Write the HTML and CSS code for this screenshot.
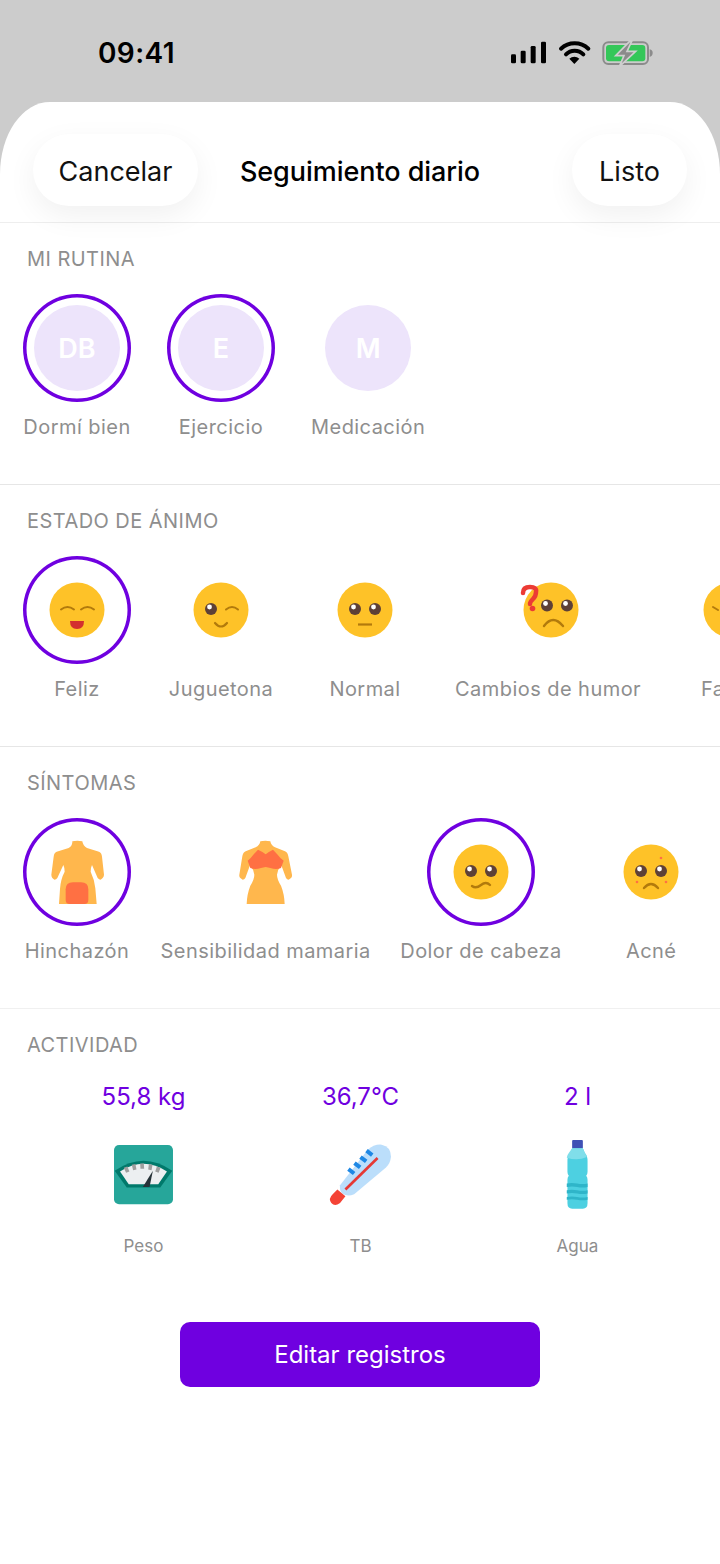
FILE: index.html
```html
<!DOCTYPE html>
<html lang="es">
<head>
<meta charset="utf-8">
<title>Seguimiento diario</title>
<link rel="stylesheet" href="styles.css">
</head>
<body>
<div class="screen">
  <div class="status">
    <span class="time">09:41</span>
    <svg class="status-icons" width="146" height="30" viewBox="90 60 438 90">
      <rect x="93" y="103" width="15" height="27" rx="4" fill="#000"/>
      <rect x="122" y="92" width="15" height="38" rx="4" fill="#000"/>
      <rect x="152" y="78" width="15" height="52" rx="4" fill="#000"/>
      <rect x="183" y="65" width="15" height="65" rx="4" fill="#000"/>
      <path d="M243 86a60 60 0 0 1 82 0" fill="none" stroke="#000" stroke-width="12" stroke-linecap="round"/>
      <path d="M258 103a36 36 0 0 1 52 0" fill="none" stroke="#000" stroke-width="12" stroke-linecap="round"/>
      <path d="M268 116a22 22 0 0 1 30 0l-15 16z" fill="#000"/>
      <rect x="370" y="67" width="134" height="65" rx="15" fill="none" stroke="#8b8b8b" stroke-width="6"/>
      <rect x="378" y="75" width="118" height="49" rx="9" fill="#34c759"/>
      <path d="M509 88c6 2 9 5 9 11s-3 10-9 12z" fill="#8b8b8b"/>
      <path d="M449 64l-42 43h25l-14 33 49-46h-26l14-30z" fill="#8b8b8b" stroke="#cfcfcf" stroke-width="5"/>
    </svg>
  </div>

  <main class="sheet">
    <header class="top">
      <button class="pill pill-left">Cancelar</button>
      <h1 class="title">Seguimiento diario</h1>
      <button class="pill pill-right">Listo</button>
    </header>

    <section class="block">
      <h2 class="heading">MI RUTINA</h2>
      <div class="row">
        <div class="item">
          <div class="circle on"><span class="initials">DB</span></div>
          <span class="label">Dormí bien</span>
        </div>
        <div class="item">
          <div class="circle on"><span class="initials">E</span></div>
          <span class="label">Ejercicio</span>
        </div>
        <div class="item">
          <div class="circle"><span class="initials">M</span></div>
          <span class="label">Medicación</span>
        </div>
      </div>
    </section>

    <section class="block">
      <h2 class="heading">ESTADO DE ÁNIMO</h2>
      <div class="row">
        <div class="item">
          <div class="circle on">
            <svg class="emoji" viewBox="-28 -28 56 56">
              <circle r="27.5" fill="#fec228"/>
              <path d="M-16-.5q6.500-5 13 0M4-.5q6.500-5 13 0" fill="none" stroke="#b27a0c" stroke-width="2" stroke-linecap="round"/>
              <path d="M-7 11h14q0 8-7 8t-7-8z" fill="#d32f2f"/>
            </svg>
          </div>
          <span class="label">Feliz</span>
        </div>
        <div class="item">
          <div class="circle">
            <svg class="emoji" viewBox="-28 -28 56 56">
              <circle r="27.5" fill="#fec228"/>
              <circle cx="-10" cy="-1" r="6" fill="#5d4037"/>
              <circle cx="-11.500" cy="-3" r="2.400" fill="#fff"/>
              <path d="M5-.5q6-5 12 0" fill="none" stroke="#b27a0c" stroke-width="2" stroke-linecap="round"/>
              <path d="M-6 13q6 7 12 0" fill="none" stroke="#b27a0c" stroke-width="2.200" stroke-linecap="round"/>
            </svg>
          </div>
          <span class="label">Juguetona</span>
        </div>
        <div class="item">
          <div class="circle">
            <svg class="emoji" viewBox="-28 -28 56 56">
              <circle r="27.5" fill="#fec228"/>
              <circle cx="-10" cy="-1" r="6" fill="#5d4037"/>
              <circle cx="-11.500" cy="-3" r="2.400" fill="#fff"/>
              <circle cx="10" cy="-1" r="6" fill="#5d4037"/>
              <circle cx="8.500" cy="-3" r="2.400" fill="#fff"/>
              <path d="M-7 14.500h14" stroke="#b27a0c" stroke-width="2.200"/>
            </svg>
          </div>
          <span class="label">Normal</span>
        </div>
        <div class="item">
          <div class="circle">
            <svg class="emoji emoji-wide" viewBox="-34 -28 62 56">
              <circle r="27.500" fill="#fec228"/>
              <circle cx="-4" cy="-4.500" r="6" fill="#5d4037"/>
              <circle cx="-5.500" cy="-6.500" r="2.400" fill="#fff"/>
              <circle cx="16" cy="-4.500" r="6" fill="#5d4037"/>
              <circle cx="14.500" cy="-6.500" r="2.400" fill="#fff"/>
              <path d="M-7 16q9-12 19 0" fill="none" stroke="#b27a0c" stroke-width="2.400" stroke-linecap="round"/>
              <path d="M-28-17q0-6 7-6t6 5q0 4-3 7t-3 5" fill="none" stroke="#ec3b35" stroke-width="4.500" stroke-linecap="round"/>
              <circle cx="-18.500" cy="-1.500" r="2.800" fill="#ec3b35"/>
            </svg>
          </div>
          <span class="label">Cambios de humor</span>
        </div>
        <div class="item">
          <div class="circle">
            <svg class="emoji" viewBox="-28 -28 56 56">
              <circle r="27.5" fill="#fec228"/>
              <path d="M-18-3l5 3" stroke="#b27a0c" stroke-width="2" stroke-linecap="round"/>
            </svg>
          </div>
          <span class="label">Fatiga</span>
        </div>
      </div>
    </section>

    <section class="block block-soft">
      <h2 class="heading">SÍNTOMAS</h2>
      <div class="row row-tight">
        <div class="item">
          <div class="circle on">
            <svg class="figure" viewBox="120 88 165 195">
              <path d="M187 92q15-4 30 0q2 14 14 20l36 11q8 3 9 15l6 54q0 6-4 10l-6 5q-5 0-9-5l-17-39q-4 8-4 20 12 25 14 50l4 47H147l3-45q2-30 14-52 0-12-4-20l-18 39q-3 5-9 5l-6-5q-3-4-3-10l7-54q1-12 9-15l36-11q12-6 11-20z" fill="#ffb74d"/>
              <path d="M167 236q0-21 22-21h24q22 0 22 21v32q0 12-12 12h-44q-12 0-12-12z" fill="#ff7043"/>
            </svg>
          </div>
          <span class="label">Hinchazón</span>
        </div>
        <div class="item">
          <div class="circle">
            <svg class="figure" viewBox="685 88 165 195">
              <path d="M752 92q15-4 30 0q2 12 14 18l30 12q8 3 10 15l11 55q1 6-3 10l-7 5q-5 0-8-5l-14-38q-12 14-13 28 0 14 12 33 10 25 11 55H711q1-30 11-55 12-19 12-33-1-14-13-28l-14 38q-3 5-8 5l-7-5q-4-4-3-10l9-55q2-12 10-15l30-12q12-6 14-18z" fill="#ffb74d"/>
              <path d="M714 150q10-8 17-18l14-15q12 5 23 14 11-9 22-14l14 15q7 10 18 18l-8 22q-14 6-32 0l-14-3-14 3q-18 6-32 0z" fill="#ff7043"/>
            </svg>
          </div>
          <span class="label">Sensibilidad mamaria</span>
        </div>
        <div class="item">
          <div class="circle on">
            <svg class="emoji" viewBox="-28 -28 56 56">
              <circle r="27.5" fill="#fec228"/>
              <circle cx="-10" cy="-1" r="6" fill="#5d4037"/>
              <circle cx="-11.500" cy="-3" r="2.400" fill="#fff"/>
              <circle cx="10" cy="-1" r="6" fill="#5d4037"/>
              <circle cx="8.500" cy="-3" r="2.400" fill="#fff"/>
              <path d="M-9 14q4 3 9-1t9 0" fill="none" stroke="#b27a0c" stroke-width="2.400" stroke-linecap="round"/>
            </svg>
          </div>
          <span class="label">Dolor de cabeza</span>
        </div>
        <div class="item item-last">
          <div class="circle">
            <svg class="emoji" viewBox="-28 -28 56 56">
              <circle r="27.5" fill="#fec228"/>
              <circle cx="-10" cy="-1" r="6" fill="#5d4037"/>
              <circle cx="-11.500" cy="-3" r="2.400" fill="#fff"/>
              <circle cx="10" cy="-1" r="6" fill="#5d4037"/>
              <circle cx="8.500" cy="-3" r="2.400" fill="#fff"/>
              <path d="M-7 16q7-8 14 0" fill="none" stroke="#b27a0c" stroke-width="2.400" stroke-linecap="round"/>
              <circle cx="10" cy="-14" r="1.300" fill="#ff7043"/>
              <circle cx="15" cy="10" r="1.300" fill="#ff7043"/>
              <circle cx="-14" cy="10" r="1.300" fill="#ff7043"/>
            </svg>
          </div>
          <span class="label">Acné</span>
        </div>
      </div>
    </section>

    <section class="block block-last">
      <h2 class="heading">ACTIVIDAD</h2>
      <div class="stats">
        <div class="stat">
          <span class="value">55,8 kg</span>
          <svg class="stat-icon" viewBox="66 39 188 188">
            <rect x="72" y="45" width="176" height="177" rx="15" fill="#26a69a"/>
            <path d="M74 122q86-60 172 0l-36 50H110z" fill="#00796b"/>
            <path d="M90 124q70-46 140 0l-26 38H116z" fill="#eceff1"/>
            <path d="M101 113l11-4 6 15-10 4zM125 104l11-2 3 16-10 2zM150 100h11l1 16h-11zM176 102l11 2-3 16-10-2zM200 109l11 4-6 15-10-4z" fill="#9e9e9e"/>
            <path d="M188 122l-30 48h20z" fill="#263238"/>
          </svg>
          <span class="caption">Peso</span>
        </div>
        <div class="stat">
          <span class="value">36,7°C</span>
          <svg class="stat-icon" viewBox="55 39 188 188">
            <path d="M88 165L170 60Q190 42 212 44 240 50 240 80 238 100 225 112L130 192Q110 200 95 190 85 178 88 165z" fill="#bbdefb"/>
            <path d="M80 178L104 198 88 218Q72 230 62 218 52 205 66 192z" fill="#f44336"/>
            <path d="M104 178l96-94" stroke="#e53935" stroke-width="8"/>
            <path d="M113 117l17 13M131 99l17 13M149 81l17 13M167 62l17 13" stroke="#1e88e5" stroke-width="12"/>
          </svg>
          <span class="caption">TB</span>
        </div>
        <div class="stat">
          <span class="value">2 l</span>
          <svg class="stat-icon" viewBox="48 39 188 188" >
            <rect x="126" y="30" width="32" height="26" rx="3" fill="#3f51b5"/>
            <path d="M126 55h32l6 14q8 8 8 24v32q0 8-4 12 4 4 4 12v70q0 16-14 16h-32q-14 0-14-16v-70q0-8 4-12-4-4-4-12V93q0-16 8-24z" fill="#4dd0e1"/>
            <path d="M126 55h32l6 14q4 4 6 12-28 12-60 2 1-8 6-14z" fill="#80deea"/>
            <path d="M110 160q15-3 31 0t31 0v10q-15 3-31 0t-31 0zM110 180q15-3 31 0t31 0v10q-15 3-31 0t-31 0zM110 200q15-3 31 0t31 0v8q-15 3-31 0t-31 0z" fill="#2fb5c9"/>
          </svg>
          <span class="caption">Agua</span>
        </div>
      </div>
      <button class="cta">Editar registros</button>
    </section>
  </main>
</div>
</body>
</html>
```

FILE: styles.css
```css
* { box-sizing: border-box; }
html, body { margin: 0; padding: 0; }
body { background: #fff; font-family: Inter, "Noto Sans", "Liberation Sans", sans-serif; }
.screen { width: 720px; height: 1564px; overflow: hidden; background: #ccc; display: flex; flex-direction: column; }

.status { height: 102px; flex: none; display: flex; justify-content: space-between; align-items: flex-start; padding: 36px 64px 0 98px; }
.time { font-size: 28px; line-height: 34px; font-weight: 600; letter-spacing: .4px; color: #000; }
.status-icons { display: block; margin-top: 4px; }

.sheet { flex: 1; background: #fff; border-radius: 50px 50px 0 0 / 72px 72px 0 0; overflow: hidden; }

.top { height: 121px; display: grid; grid-template-columns: 1fr auto 1fr; align-items: center; padding: 16px 33px 0; border-bottom: 1px solid #eee; }
.pill { height: 72px; border: 0; border-radius: 36px; background: #fff; box-shadow: 0 10px 30px rgba(0,0,0,.06); font: 400 27px Inter, sans-serif; color: #111; padding: 2px 0 0; }
.pill-left { width: 165px; justify-self: start; }
.pill-right { width: 115px; justify-self: end; }
.title { margin: 0; padding-top: 2px; font-size: 27px; letter-spacing: -.05px; font-weight: 550; color: #000; }

.block { height: 262px; padding: 24px 0 0 23px; border-bottom: 1px solid #e6e6e6; overflow: hidden; }
.block-soft { border-bottom-color: #f0f0f0; }
.block-last { border-bottom: 0; height: auto; padding-left: 0; }
.heading { margin: 0 0 23px 4px; font-size: 20px; line-height: 24px; font-weight: 400; letter-spacing: .45px; color: #8e8e8e; }
.block-last .heading { margin-left: 27px; margin-bottom: 25px; }

.row { display: flex; gap: 36px; }
.row-tight { gap: 29.5px; }
.item { flex: none; display: flex; flex-direction: column; align-items: center; gap: 13px; }
.item-last { margin-left: 6px; }
.circle { width: 108px; height: 108px; flex: none; border-radius: 50%; display: flex; align-items: center; justify-content: center; }
.circle.on { box-shadow: inset 0 0 0 3.5px #6f00e0; }
.initials { width: 86px; height: 86px; border-radius: 50%; background: #ede4fb; color: #fff; font-size: 27px; font-weight: 600; display: flex; align-items: center; justify-content: center; }
.label { font-size: 20px; line-height: 24px; color: #8e8e8e; letter-spacing: .45px; white-space: nowrap; }
.emoji { width: 56px; height: 56px; display: block; }
.emoji-wide { width: 62px; }
.figure { width: 55px; height: 65px; display: block; }

.stats { display: grid; grid-template-columns: repeat(3, 217px); padding-left: 35px; }
.stat { display: flex; flex-direction: column; align-items: center; }
.value { font-size: 24px; line-height: 30px; color: #6f00e0; }
.stat-icon { width: 63px; height: 63px; display: block; margin-top: 31px; overflow: visible; }
.caption { margin-top: 30px; font-size: 17px; line-height: 20px; color: #8e8e8e; }
.cta { display: block; width: 360px; height: 65px; margin: 66px auto 0; border: 0; border-radius: 10px; background: #6f00e0; color: #fff; font: 400 24px Inter, sans-serif; }
```
